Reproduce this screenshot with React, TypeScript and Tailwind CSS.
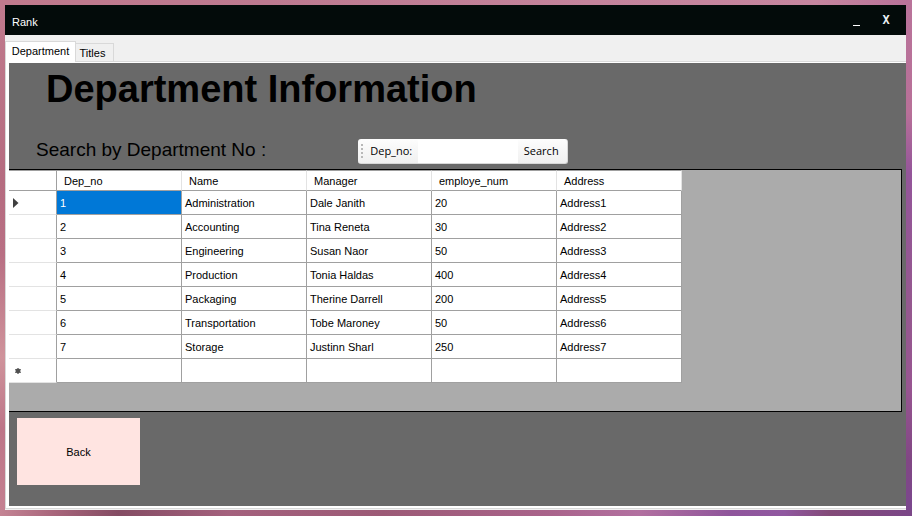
import React from "react";

type Department = {
  no: string;
  name: string;
  manager: string;
  employees: string;
  address: string;
};

const departments: Department[] = [
  { no: "1", name: "Administration", manager: "Dale Janith", employees: "20", address: "Address1" },
  { no: "2", name: "Accounting", manager: "Tina Reneta", employees: "30", address: "Address2" },
  { no: "3", name: "Engineering", manager: "Susan Naor", employees: "50", address: "Address3" },
  { no: "4", name: "Production", manager: "Tonia Haldas", employees: "400", address: "Address4" },
  { no: "5", name: "Packaging", manager: "Therine Darrell", employees: "200", address: "Address5" },
  { no: "6", name: "Transportation", manager: "Tobe Maroney", employees: "50", address: "Address6" },
  { no: "7", name: "Storage", manager: "Justinn Sharl", employees: "250", address: "Address7" },
];

const columns = ["Dep_no", "Name", "Manager", "employe_num", "Address"];

const rowHead = "border-r border-b border-r-[#a0a0a0] border-b-[#e3e3e3] p-0";
const cell = "border-r border-b border-[#a0a0a0] px-[3px] py-0";

function TitleBar() {
  return (
    <header className="flex h-[30px] items-center bg-[#030b0a] pr-[5px] pl-[7px] text-white">
      <h1 className="flex-1 pt-1 leading-4">Rank</h1>
      <button type="button" aria-label="Minimize" className="flex h-5 w-[30px] items-end justify-center pb-1">
        <span className="h-px w-[7px] bg-white" />
      </button>
      <button
        type="button"
        aria-label="Close"
        className="h-5 w-[30px] font-['DejaVu_Sans_Mono',monospace] text-[12px] leading-5 font-bold text-[#e8f0f4]"
      >
        X
      </button>
    </header>
  );
}

function Tabs() {
  return (
    <div role="tablist" className="flex h-[27px] items-end border-b border-[#d9d9d9] bg-[#f0f0f0] leading-4">
      <button
        type="button"
        role="tab"
        aria-selected="true"
        className="-mb-px h-[21px] w-[71px] border border-b-0 border-[#d9d9d9] bg-white pb-[2px]"
      >
        Department
      </button>
      <button
        type="button"
        role="tab"
        aria-selected="false"
        className="h-[18px] w-[38px] border-t border-r border-[#d9d9d9] pr-1"
      >
        Titles
      </button>
    </div>
  );
}

function SearchBar() {
  return (
    <form
      onSubmit={(e) => e.preventDefault()}
      className="flex h-[25px] w-[210px] items-center rounded-[3px] border-r border-b border-[#d8d8d8] bg-linear-to-b from-[#fdfdfd] to-[#f0f0f0] font-['Open_Sans','Noto_Sans',sans-serif]"
    >
      <span className="ml-[3px] flex flex-col gap-[2px]">
        <i className="size-[2px] bg-[#b8b8b8]" />
        <i className="size-[2px] bg-[#b8b8b8]" />
        <i className="size-[2px] bg-[#b8b8b8]" />
        <i className="size-[2px] bg-[#b8b8b8]" />
      </span>
      <label htmlFor="dep-no" className="w-[55px] pl-[7px]">
        Dep_no:
      </label>
      <input id="dep-no" type="text" className="h-[23px] w-[100px] bg-white px-1 outline-none" />
      <button type="submit" className="h-[23px] flex-1 pr-[3px]">
        Search
      </button>
    </form>
  );
}

function DepartmentTable() {
  return (
    <div className="mr-1 h-[243px] overflow-hidden border-y border-r border-black bg-[#ababab]">
      <table className="w-[673px] table-fixed border-separate border-spacing-0 bg-white text-left leading-4">
        <colgroup>
          <col className="w-[48px]" />
          {columns.map((c) => (
            <col key={c} className="w-[125px]" />
          ))}
        </colgroup>
        <thead>
          <tr className="h-[21px]">
            <th className="border-t border-r border-b border-t-[#a0a0a0] border-r-[#a0a0a0] border-b-[#a0a0a0] p-0" />
            {columns.map((c) => (
              <th
                key={c}
                scope="col"
                className="border-t border-r border-b border-t-[#a0a0a0] border-r-[#e3e3e3] border-b-[#a0a0a0] px-[7px] py-0 font-normal"
              >
                {c}
              </th>
            ))}
          </tr>
        </thead>
        <tbody>
          {departments.map((d, i) => (
            <tr key={d.no} className="h-6">
              <td className={rowHead}>
                {i === 0 && (
                  <svg viewBox="0 0 6 10" className="ml-1 h-[10px] w-[6px]" fill="#404040" aria-label="Current row">
                    <path d="M0 0 L5.5 5 L0 10 Z" />
                  </svg>
                )}
              </td>
              <td className={i === 0 ? "border-r border-b border-[#a0a0a0] bg-[#0078d7] px-[3px] py-0 text-white" : cell}>
                {d.no}
              </td>
              <td className={cell}>{d.name}</td>
              <td className={cell}>{d.manager}</td>
              <td className={cell}>{d.employees}</td>
              <td className={cell}>{d.address}</td>
            </tr>
          ))}
          <tr className="h-6">
            <td className={rowHead}>
              <svg viewBox="0 0 6 6" className="ml-[6px] size-[6px]" aria-label="New row">
                <circle cx="3" cy="3" r="2.4" fill="#505050" />
                <path d="M3 0V6M0 1.5L6 4.5M0 4.5L6 1.5" stroke="#505050" strokeWidth="1" />
              </svg>
            </td>
            {columns.map((c) => (
              <td key={c} className={cell} />
            ))}
          </tr>
        </tbody>
      </table>
    </div>
  );
}

export default function App() {
  return (
    <div className="bg-[linear-gradient(to_right,#c48494_0%,#a8657b_6%,#844c63_13%,#a4617d_25%,#9c5a76_42%,#a9638a_60%,#b270a0_70%,#8f559b_80%,#9058a0_86%,#834a78_91%,#7b4788_100%)] pb-[6px]">
      <div className="bg-[linear-gradient(to_bottom,#b9739a_0%,#b87098_22%,#94559a_34%,#95588f_60%,#985591_76%,#814784_90%,#7b478e_100%)]">
        <div className="mr-[6px] flex min-h-[calc(100vh-6px)] flex-col bg-[linear-gradient(to_right,#c07a8d_0%,#bd7a90_30%,#c4849c_65%,#c6869f_90%,#b9739a_100%)]">
          <div className="flex flex-1 flex-col bg-[linear-gradient(to_bottom,transparent_0px,transparent_5px,#c07a8d_5px,#b56c80_35%,#b86f83_50%,#cf939b_70%,#bd7588_84%,#c48091_100%)] bg-[length:5px_100%] bg-no-repeat pt-[5px] pl-[5px] font-['Liberation_Sans',Arial,sans-serif] text-[11px] text-black">
            <div className="flex flex-1 flex-col bg-white">
              <TitleBar />
              <Tabs />
              <div className="flex flex-1 flex-col border-b border-l border-[#d9d9d9] pt-px pb-[2px] pl-[3px]">
                <main className="flex-1 bg-[#696969]">
                  <h2 className="pt-1 pl-[37px] text-[38px] leading-[44px] font-bold">Department Information</h2>
                  <div className="flex items-start gap-[92px] pt-7 pb-[5px] pl-[27px]">
                    <p className="text-[19px] leading-[22px]">Search by Department No :</p>
                    <SearchBar />
                  </div>
                  <DepartmentTable />
                  <button type="button" className="mt-[6px] ml-2 h-[67px] w-[123px] bg-[#ffe4e1] pt-px">
                    Back
                  </button>
                </main>
              </div>
              <div className="h-px bg-[#f0f0f0]" />
            </div>
          </div>
        </div>
      </div>
    </div>
  );
}
